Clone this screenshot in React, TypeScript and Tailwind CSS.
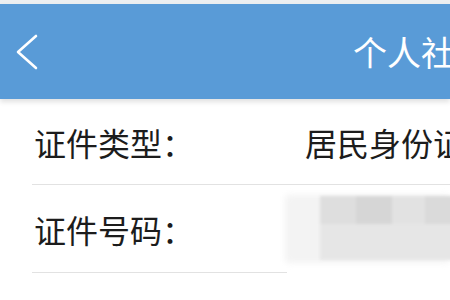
// @ts-nocheck
import React from 'react';

const cjk = { fontFamily: '"Noto Sans CJK SC", "Noto Sans", sans-serif' };

const BlurredNumber = () => (
  <div className="relative h-[68px] w-[170px] bg-white">
    <div className="absolute inset-0 rounded-sm bg-[#f3f3f3] blur-[3px]" />
    <div className="absolute left-[35px] top-[1px] flex h-[64px] flex-col blur-[1.5px]">
      <div className="flex h-[28px]">
        <div className="w-[36px] bg-[#dedede]" />
        <div className="w-[36px] bg-[#d6d6d6]" />
        <div className="w-[33px] bg-[#e2e2e2]" />
        <div className="w-[30px] bg-[#dadada]" />
      </div>
      <div className="flex h-[36px]">
        <div className="w-[135px] bg-[#e6e6e6]" />
      </div>
    </div>
  </div>
);

export default function App() {
  return (
    <div className="h-[300px] w-[450px] overflow-hidden bg-white" style={cjk}>
      <div className="h-[4px] bg-[#eceff1]" />
      <header className="relative flex h-[95px] items-center bg-[#599bd7] shadow-[0_3px_5px_rgba(0,0,0,0.12)]">
        <svg className="ml-[15px] shrink-0" width="24" height="36" viewBox="0 0 24 36" fill="none">
          <path d="M21 2 L3 18 L21 34" stroke="#ffffff" strokeWidth="2.6" strokeLinecap="round" strokeLinejoin="round" />
        </svg>
        <span className="ml-[314px] whitespace-nowrap text-[34px] leading-none text-white">个人社保查询</span>
      </header>

      <div className="pl-[32px]">
        <div className="flex h-[86px] items-center border-b-[1.5px] border-[#e2e2e2]">
          <span className="w-[273px] shrink-0 pl-[2px] text-[32px] leading-none text-[#1c1c1c]">证件类型：</span>
          <span className="whitespace-nowrap text-[32px] leading-none text-[#1c1c1c]">居民身份证</span>
        </div>

        <div className="relative flex h-[88px] items-center">
          <span className="w-[253px] shrink-0 pl-[2px] text-[32px] leading-none text-[#1c1c1c]">证件号码：</span>
          <BlurredNumber />
          <div className="absolute bottom-0 left-0 h-[1.5px] w-[255px] bg-[#e2e2e2]" />
        </div>

        <div className="flex h-[86px] items-center">
          <span className="w-[273px] shrink-0 pl-[2px] text-[32px] leading-none text-[#bdbdbd] blur-[1px]">参保人姓名：</span>
        </div>
      </div>
    </div>
  );
}
